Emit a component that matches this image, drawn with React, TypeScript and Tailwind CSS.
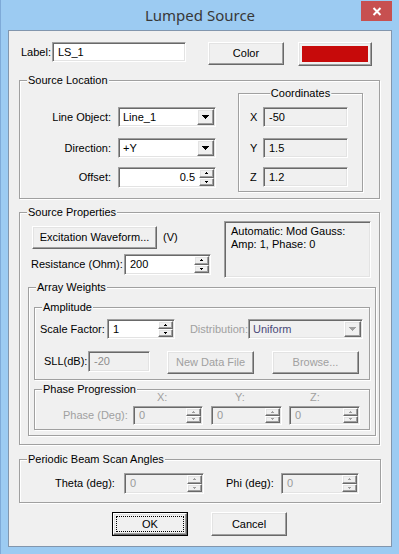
import React from "react";

const sunken =
  "border border-t-[#a0a0a0] border-l-[#a0a0a0] border-r-white border-b-white shadow-[inset_1px_1px_0_#696969,inset_-1px_-1px_0_#e3e3e3]";
const raised =
  "border border-t-white border-l-white border-r-[#696969] border-b-[#696969] shadow-[inset_-1px_-1px_0_#a0a0a0,inset_1px_1px_0_#e3e3e3] bg-[#f0f0f0]";

function Group({ title, className, center, children }: { title: string; className: string; center?: boolean; children?: React.ReactNode }) {
  return (
    <div className={`relative shrink-0 border border-[#a0a0a0] shadow-[inset_1px_1px_0_#fff,1px_1px_0_#fff] ${className}`}>
      <span className={`absolute -top-[7px] px-[1px] leading-[13px] bg-[#f0f0f0] whitespace-nowrap ${center ? "left-1/2 -translate-x-1/2" : "left-[7px]"}`}>
        {title}
      </span>
      {children}
    </div>
  );
}

function Arrow({ color = "#000" }: { color?: string }) {
  return (
    <svg width="7" height="4" viewBox="0 0 7 4">
      <path d="M0 0h7v1H0zM1 1h5v1H1zM2 2h3v1H2zM3 3h1v1H3z" fill={color} />
    </svg>
  );
}

function Spin({ disabled }: { disabled?: boolean }) {
  const c = disabled ? "#a0a0a0" : "#000";
  return (
    <div className="w-[15px] h-full flex flex-col">
      <div className={`flex-1 flex items-center justify-center ${raised}`}>
        <svg width="3" height="2" viewBox="0 0 3 2">
          <path d="M1 0h1v1H1zM0 1h3v1H0z" fill={c} />
        </svg>
      </div>
      <div className={`flex-1 flex items-center justify-center ${raised}`}>
        <svg width="3" height="2" viewBox="0 0 3 2">
          <path d="M0 0h3v1H0zM1 1h1v1H1z" fill={c} />
        </svg>
      </div>
    </div>
  );
}

function SpinField({ value, className, disabled, right }: { value: string; className: string; disabled?: boolean; right?: boolean }) {
  return (
    <div className={`flex p-[1px] ${sunken} ${disabled ? "bg-[#f0f0f0] text-[#9a9a9a]" : "bg-white"} ${className}`}>
      <div className={`flex-1 flex items-center ${right ? "justify-end pr-[4px]" : "pl-[4px]"}`}>{value}</div>
      <Spin disabled={disabled} />
    </div>
  );
}

function Combo({ value, className, disabled }: { value: string; className: string; disabled?: boolean }) {
  return (
    <div className={`flex p-[1px] ${sunken} ${disabled ? "bg-[#f0f0f0] text-[#4a4a78]" : "bg-white"} ${className}`}>
      <div className="flex-1 flex items-center pl-[3px]">{value}</div>
      <div className={`w-[17px] h-full flex items-center justify-center ${raised}`}>
        <Arrow color={disabled ? "#a0a0a0" : "#000"} />
      </div>
    </div>
  );
}

function Field({ value, className, readOnly, dim }: { value: string; className: string; readOnly?: boolean; dim?: boolean }) {
  return (
    <div className={`flex items-center pl-[5px] ${sunken} ${readOnly ? "bg-[#f0f0f0]" : "bg-white"} ${dim ? "text-[#8d8d8d]" : ""} ${className}`}>
      {value}
    </div>
  );
}

function Btn({ text, className, disabled }: { text: string; className: string; disabled?: boolean }) {
  return (
    <div className={`flex items-center justify-center shrink-0 ${raised} ${disabled ? "text-[#a0a0a0]" : ""} ${className}`}>
      {text}
    </div>
  );
}

export default function App() {
  return (
    <div className="w-[399px] h-[554px] bg-[#9ccbf2] border-l border-[#7eaad8] flex flex-col text-[11px] leading-[13px] text-black font-['Liberation_Sans',Arial,sans-serif]">
      <div className="relative h-[30px] shrink-0 flex items-center justify-center">
        <span className="font-['Noto_Sans',sans-serif] text-[15px] leading-none text-[#383838]">Lumped Source</span>
        <div className="absolute top-[1px] right-[7px] w-[31px] h-[20px] bg-[#c75050] flex items-center justify-center">
          <svg width="10" height="9" viewBox="0 0 10 9">
            <path d="M1.5 1L8.5 8M8.5 1L1.5 8" stroke="#fff" strokeWidth="2" />
          </svg>
        </div>
      </div>

      <div className="ml-[7px] w-[384px] h-[517px] border border-[#8296ad] bg-[#f0f0f0] flex flex-col">
        {/* label row */}
        <div className="mt-[11px] pl-[12px] flex items-start h-[24px]">
          <div className="w-[31px] h-[20px] flex items-center">Label:</div>
          <Field value="LS_1" className="w-[134px] h-[20px] pl-[4px]" />
          <Btn text="Color" className="ml-[22px] w-[76px] h-[23px]" />
          <div className={`ml-[14px] w-[74px] h-[24px] p-[3px] ${raised}`}>
            <div className="w-full h-full bg-[#c70a0a]" />
          </div>
        </div>

        {/* source location */}
        <Group title="Source Location" className="mt-[14px] ml-[10px] w-[361px] h-[119px]">
          <div className="flex items-start">
            <div className="w-[196px] flex flex-col">
              <div className="mt-[26px] flex items-center">
                <div className="w-[91px] text-right">Line Object:</div>
                <Combo value="Line_1" className="ml-[7px] w-[98px] h-[20px]" />
              </div>
              <div className="mt-[11px] flex items-center">
                <div className="w-[91px] text-right">Direction:</div>
                <Combo value="+Y" className="ml-[7px] w-[98px] h-[20px]" />
              </div>
              <div className="mt-[9px] flex items-center">
                <div className="w-[91px] text-right">Offset:</div>
                <SpinField value="0.5" right className="ml-[7px] w-[98px] h-[21px]" />
              </div>
            </div>
            <Group title="Coordinates" center className="mt-[12px] ml-[22px] w-[125px] h-[99px]">
              <div className="mt-[13px] pl-[11px] flex items-center">
                <div className="w-[13px]">X</div>
                <Field value="-50" readOnly className="w-[85px] h-[20px]" />
              </div>
              <div className="mt-[11px] pl-[11px] flex items-center">
                <div className="w-[13px]">Y</div>
                <Field value="1.5" readOnly className="w-[85px] h-[20px]" />
              </div>
              <div className="mt-[9px] pl-[11px] flex items-center">
                <div className="w-[13px]">Z</div>
                <Field value="1.2" readOnly className="w-[85px] h-[20px]" />
              </div>
            </Group>
          </div>
        </Group>

        {/* source properties */}
        <Group title="Source Properties" className="mt-[13px] ml-[10px] w-[361px] h-[233px]">
          <div className="flex items-start">
            <div className="w-[204px] flex flex-col">
              <div className="mt-[13px] pl-[12px] flex items-center">
                <Btn text="Excitation Waveform..." className="w-[125px] h-[23px]" />
                <span className="ml-[6px]">(V)</span>
              </div>
              <div className="mt-[5px] pl-[11px] flex items-center">
                <div className="w-[93px]">Resistance (Ohm):</div>
                <SpinField value="200" className="w-[87px] h-[21px]" />
              </div>
            </div>
            <div className={`mt-[8px] w-[147px] h-[57px] pl-[6px] pt-[3px] bg-[#f0f0f0] ${sunken}`}>
              <div>Automatic: Mod Gauss:</div>
              <div>Amp: 1, Phase: 0</div>
            </div>
          </div>

          <Group title="Array Weights" className="mt-[9px] ml-[8px] w-[348px] h-[149px]">
            <Group title="Amplitude" className="mt-[19px] ml-[5px] w-[336px] h-[73px]">
              <div className="mt-[11px] pl-[5px] flex items-center">
                <div className="w-[67px]">Scale Factor:</div>
                <SpinField value="1" className="w-[68px] h-[20px]" />
                <div className="w-[73px] text-right text-[#a0a0a0]">Distribution:</div>
                <Combo value="Uniform" disabled className="w-[115px] h-[20px]" />
              </div>
              <div className="mt-[12px] pl-[9px] flex items-start">
                <div className="w-[44px] h-[21px] flex items-center">SLL(dB):</div>
                <Field value="-20" readOnly dim className="w-[62px] h-[21px]" />
                <Btn text="New Data File" disabled className="ml-[17px] w-[87px] h-[23px]" />
                <Btn text="Browse..." disabled className="ml-[18px] w-[87px] h-[23px]" />
              </div>
            </Group>
            <Group title="Phase Progression" className="mt-[9px] ml-[5px] w-[336px] h-[41px]">
              <div className="mt-[1px] flex text-[#a0a0a0]">
                <div className="w-[98px]" />
                <div className="w-[70px] pl-[24px]">X:</div>
                <div className="ml-[8px] w-[71px] pl-[24px]">Y:</div>
                <div className="ml-[7px] w-[71px] pl-[21px]">Z:</div>
              </div>
              <div className="mt-[2px] flex items-center">
                <div className="w-[98px] pl-[28px] text-[#a0a0a0]">Phase (Deg):</div>
                <SpinField value="0" disabled className="w-[70px] h-[19px]" />
                <SpinField value="0" disabled className="ml-[8px] w-[71px] h-[19px]" />
                <SpinField value="0" disabled className="ml-[7px] w-[71px] h-[19px]" />
              </div>
            </Group>
          </Group>
        </Group>

        {/* periodic */}
        <Group title="Periodic Beam Scan Angles" className="mt-[14px] ml-[10px] w-[362px] h-[44px]">
          <div className="mt-[13px] pl-[35px] flex items-center">
            <div className="w-[69px]">Theta (deg):</div>
            <SpinField value="0" disabled className="w-[80px] h-[21px]" />
            <div className="ml-[22px] w-[55px]">Phi (deg):</div>
            <SpinField value="0" disabled className="w-[78px] h-[21px]" />
          </div>
        </Group>

        {/* buttons */}
        <div className="mt-[9px] ml-[103px] flex">
          <div className="w-[76px] h-[24px] border border-black flex">
            <div className={`flex-1 p-[2px] ${raised}`}>
              <div className="w-full h-full border border-dotted border-black flex items-center justify-center">OK</div>
            </div>
          </div>
          <Btn text="Cancel" className="ml-[23px] w-[76px] h-[24px]" />
        </div>
      </div>
    </div>
  );
}
